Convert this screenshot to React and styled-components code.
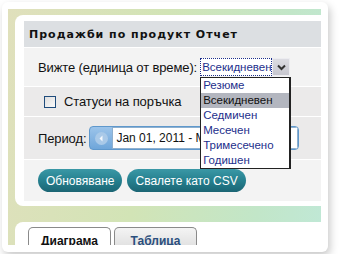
import React from 'react';
import styled, { createGlobalStyle } from 'styled-components';

const GlobalStyle = createGlobalStyle`
    body {
        margin: 0;
        background: #fff;
        font-family: "Liberation Sans", Arial, sans-serif;
    }
`

const periods = ['Резюме', 'Всекидневен', 'Седмичен', 'Месечен', 'Тримесечено', 'Годишен'];

function App() {
    const selected = 'Всекидневен';

    return (
        <Page>
            <GlobalStyle />
            <Card>
                <Band>
                    <Panel>
                        <Header>Продажби по продукт Отчет</Header>
                        <Row height={38} tone='light'>
                            <Label>Вижте (единица от време):</Label>
                            <Select>
                                <SelectValue>{selected}</SelectValue>
                                <SelectArrow>
                                    <svg width='9' height='7' viewBox='0 0 9 7'>
                                        <path d='M1 1.5 L4.5 5 L8 1.5' fill='none' stroke='#333' strokeWidth='2' />
                                    </svg>
                                </SelectArrow>
                                <ListBox>
                                    {periods.map(p => (
                                        <Option key={p} active={p === selected}>{p}</Option>
                                    ))}
                                </ListBox>
                            </Select>
                        </Row>
                        <Row height={29} tone='dark' indent={20}>
                            <Checkbox />
                            <Label>Статуси на поръчка</Label>
                        </Row>
                        <Row height={42} tone='dark'>
                            <Label>Период:</Label>
                            <DateRange>
                                <PrevButton>
                                    <svg width='13' height='13' viewBox='0 0 13 13'>
                                        <path d='M7.5 3.5 L4.5 6.5 L7.5 9.5 Z' fill='#f4f8fc' />
                                    </svg>
                                </PrevButton>
                                <DateInput>Jan 01, 2011 - Mar 31, 2011</DateInput>
                            </DateRange>
                        </Row>
                        <Row height={41} tone='light'>
                            <Buttons>
                                <Button>Обновяване</Button>
                                <Button>Свалете като CSV</Button>
                            </Buttons>
                        </Row>
                    </Panel>
                    <TabPanel>
                        <Tab active>Диаграма</Tab>
                        <Tab>Таблица</Tab>
                    </TabPanel>
                </Band>
            </Card>
        </Page>
    )
}

const Page = styled.div`
    padding: 2px;
`

const Card = styled.div`
    width: 326px;
    height: 250px;
    box-sizing: border-box;
    padding: 7px 7px 7px 6px;
    background: #fff;
    border-radius: 6px;
    box-shadow: 2px 4px 8px rgba(0, 0, 0, 0.22);
`

const Band = styled.div`
    height: 100%;
    box-sizing: border-box;
    overflow: hidden;
    display: flex;
    flex-direction: column;
    gap: 16px;
    padding: 6px 0 0 7px;
    background: linear-gradient(100deg, #e0e0bc 0%, #d2e4b6 45%, #c2e6c8 80%, #c0e8d6 100%);
`

const Panel = styled.div`
    background: #fff;
    border-radius: 8px 0 0 8px;
    padding: 6px 0 5px 9px;
`

const Header = styled.div`
    height: 26px;
    display: flex;
    align-items: center;
    padding-left: 5px;
    background: #dcdfe2;
    font-family: "DejaVu Sans", Verdana, sans-serif;
    font-size: 11px;
    font-weight: bold;
    letter-spacing: 1px;
    color: #111;
`

const Row = styled.div`
    height: ${p => p.height}px;
    display: flex;
    align-items: center;
    gap: ${p => p.indent ? 8 : 3}px;
    padding-left: ${p => p.indent || 14}px;
    border-top: 1px solid #fff;
    background: ${p => p.tone === 'dark' ? '#ebeaea' : '#f3f3f3'};
`

const Label = styled.span`
    font-size: 13px;
    letter-spacing: -0.12px;
    color: #111;
    white-space: nowrap;
`

const Select = styled.div`
    position: relative;
    width: 90px;
    height: 18px;
    display: flex;
    background: #fff;
    font-size: 11.5px;
`

const SelectValue = styled.div`
    flex: 1;
    line-height: 16px;
    padding-left: 1px;
    border: 1px dotted #1d2f8c;
    color: #1d2f8c;
    white-space: nowrap;
    overflow: hidden;
`

const SelectArrow = styled.div`
    width: 18px;
    display: flex;
    align-items: center;
    justify-content: center;
    background: linear-gradient(#dcdce2, #c6c6ce);
    border: 1px solid #ececf0;
    box-sizing: border-box;
`

const ListBox = styled.div`
    position: absolute;
    top: 19px;
    left: 0;
    width: 91px;
    box-sizing: border-box;
    border: 1px solid #222;
    border-right-width: 2px;
    background: #fff;
    z-index: 2;
`

const Option = styled.div`
    height: 15px;
    line-height: 15px;
    padding-left: 2px;
    color: ${p => p.active ? '#111' : '#1d2f8c'};
    background: ${p => p.active ? '#b3b6bf' : 'transparent'};
    white-space: nowrap;
`

const Checkbox = styled.span`
    width: 10px;
    height: 10px;
    border: 1px solid #1f4c7c;
    background: linear-gradient(135deg, #dedede, #fafafa);
`

const DateRange = styled.div`
    width: 210px;
    height: 24px;
    box-sizing: border-box;
    display: flex;
    align-items: center;
    gap: 4px;
    padding-left: 5px;
    border: 1px solid #5f98cc;
    border-radius: 4px;
    background: linear-gradient(#9cc4ea, #6fa6da);
    overflow: hidden;
`

const PrevButton = styled.div`
    width: 13px;
    height: 13px;
    border-radius: 50%;
    background: #a9c9e8;
    display: flex;
`

const DateInput = styled.div`
    flex: 1;
    height: 20px;
    line-height: 20px;
    padding-left: 3px;
    background: #fff;
    border: 1px solid #8fb0cf;
    font-size: 12px;
    color: #111;
    white-space: nowrap;
    overflow: hidden;
`

const Buttons = styled.div`
    display: flex;
    gap: 5px;
`

const Button = styled.button`
    height: 23px;
    padding: 0 8px;
    border: none;
    border-radius: 12px;
    background: linear-gradient(#3a98a6, #26808f 50%, #1b6574);
    color: #fff;
    font-family: "Liberation Sans", Arial, sans-serif;
    font-size: 12px;
`

const TabPanel = styled.div`
    flex: 1;
    display: flex;
    align-items: flex-start;
    gap: 3px;
    padding: 5px 0 0 13px;
    background: #fff;
    border-radius: 8px 0 0 0;
`

const Tab = styled.div`
    width: 83px;
    height: 24px;
    box-sizing: border-box;
    padding-top: 6px;
    text-align: center;
    border: 1px solid #8a8a8a;
    border-bottom: none;
    border-radius: 5px 5px 0 0;
    background: ${p => p.active ? '#fff' : 'linear-gradient(#f4f4f4, #dcdcdc)'};
    color: ${p => p.active ? '#111' : '#2b4f7e'};
    font-size: 12px;
    font-weight: bold;
`

export default App;
